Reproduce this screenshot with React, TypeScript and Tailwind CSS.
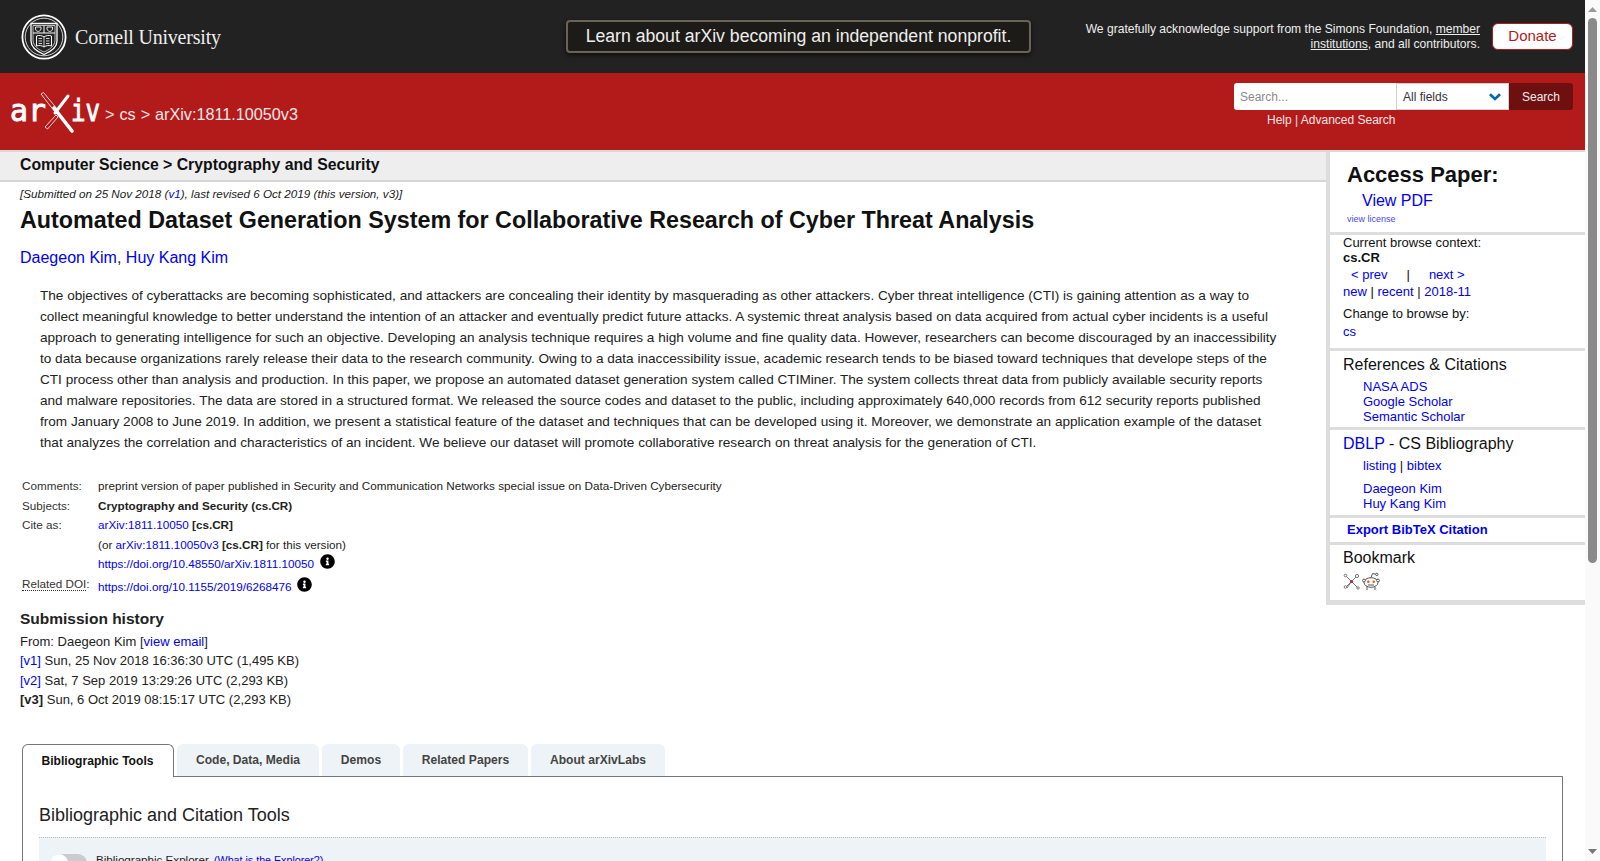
import { FaInfoCircle } from "react-icons/fa";

const link = "text-[#0000ee]";

// Cornell seal
function CornellSeal() {
  return (
    <svg width="46" height="46" viewBox="0 0 46 46" fill="none" stroke="white" className="shrink-0">
      <circle cx="23" cy="23" r="21.6" strokeWidth="1.8" />
      <circle cx="23" cy="23" r="18.8" strokeWidth="0.8" />
      <path d="M10 9.5 H36 V27 C36 34 29 38 23 40.5 C17 38 10 34 10 27 Z" strokeWidth="1.3" />
      <path d="M12 11.5 H34 V26 C34 32 28 36 23 38 C18 36 12 32 12 26 Z" strokeWidth="0.7" />
      <path d="M12 19 H34 M23 11.5 V19" strokeWidth="1" />
      <path d="M14.5 13 H20 V15 C20 17 17 17.5 17 17.5 C17 17.5 14.5 17 14.5 15 Z" strokeWidth="0.9" />
      <path d="M26 13 H31.5 V15 C31.5 17 29 17.5 29 17.5 C29 17.5 26 17 26 15 Z" strokeWidth="0.9" />
      <path d="M15.5 22 C18 21 21 21.5 23 23 C25 21.5 28 21 30.5 22 V32 C28 31 25 31.5 23 33 C21 31.5 18 31 15.5 32 Z" strokeWidth="1" />
      <path d="M23 23 V33 M17.5 24.5 H21 M17.5 27 H21 M17.5 29.5 H21 M25 24.5 H28.5 M25 27 H28.5 M25 29.5 H28.5" strokeWidth="0.8" />
    </svg>
  );
}

function ArxivLogo() {
  return (
    <svg width="92" height="44" viewBox="0 0 92 44" className="shrink-0">
      <text x="0" y="31" fontFamily="'DejaVu Sans Mono', monospace" fontSize="31" fill="white" stroke="white" strokeWidth="0.9" textLength="36" lengthAdjust="spacingAndGlyphs">ar</text>
      <text x="61" y="31" fontFamily="'DejaVu Sans Mono', monospace" fontSize="31" fill="white" stroke="white" strokeWidth="0.9" textLength="29" lengthAdjust="spacingAndGlyphs">iv</text>
      <path d="M31 4 L33.5 2.5 L48 20 L45 22 Z" fill="#b31b1b" stroke="white" strokeWidth="0.8" />
      <path d="M35 37 L46 25 L48 27 L37.5 39 Z" fill="#b31b1b" stroke="white" strokeWidth="0.8" />
      <path d="M44 18 L62 41" stroke="white" strokeWidth="3.6" strokeLinecap="round" />
      <path d="M58 6 L45 23" stroke="white" strokeWidth="3" strokeLinecap="round" />
    </svg>
  );
}

function Chevron() {
  return (
    <svg width="12" height="8" viewBox="0 0 12 8" fill="none" stroke="#0068ac" strokeWidth="2.6">
      <path d="M1 1.2 L6 6 L11 1.2" />
    </svg>
  );
}

function BibsonomyIcon() {
  return (
    <svg width="17" height="17" viewBox="0 0 17 17" fill="none" stroke="#777" strokeWidth="1">
      <path d="M2 2 L15 15 M15 2 L2 15 M8.5 8.5 L4 15 M8.5 8.5 L13 4" />
      <circle cx="2.5" cy="2.5" r="1.3" fill="white" />
      <circle cx="14" cy="3" r="1.6" fill="white" />
      <circle cx="2.5" cy="14" r="1.3" fill="white" />
      <circle cx="15" cy="15" r="1.2" fill="white" />
      <circle cx="8.5" cy="8.5" r="1.6" fill="#b0285a" stroke="none" />
    </svg>
  );
}

function RedditIcon() {
  return (
    <svg width="18" height="19" viewBox="0 0 18 19" fill="none" stroke="#555" strokeWidth="1">
      <ellipse cx="9" cy="10.5" rx="7" ry="4.8" fill="white" />
      <circle cx="2" cy="8.5" r="1.4" fill="white" />
      <circle cx="16" cy="8.5" r="1.4" fill="white" />
      <path d="M9 5.5 L10.5 1.5 L14 2.3" />
      <circle cx="14.8" cy="2.4" r="1.2" fill="white" />
      <circle cx="6.3" cy="9.8" r="1.2" fill="#ff4500" stroke="none" />
      <circle cx="11.7" cy="9.8" r="1.2" fill="#ff4500" stroke="none" />
      <path d="M5 15 V18 M13 15 V18 M6 13 H12" />
    </svg>
  );
}

function TopBanner() {
  return (
    <div className="flex h-[73px] items-center bg-[#222222] text-white">
      <div className="flex w-[552px] shrink-0 items-center pl-[21px]">
        <CornellSeal />
        <span className="ml-[8px] pt-[1px] font-['Liberation_Serif',serif] text-[20px] tracking-[-0.2px] text-[#eeeeee]">Cornell University</span>
      </div>
      <div className="ml-[14px] flex h-[33px] w-[465px] shrink-0 items-center justify-center rounded-[4px] border-2 border-[#6b6358] bg-[#1d1b17] text-[17.65px] text-[#eeeeee] shadow-[0_2px_5px_rgba(0,0,0,0.6)]">
        Learn about arXiv becoming an independent nonprofit.
      </div>
      <div className="ml-auto w-[420px] text-right text-[12.1px] leading-[15px] text-[#eeeeee]">
        We gratefully acknowledge support from the Simons Foundation, <span className="underline">member</span> <span className="underline">institutions</span>, and all contributors.
      </div>
      <div className="ml-[12px] mr-[12px] flex h-[27px] w-[81px] items-center justify-center rounded-[6px] border border-[#b31b1b] bg-white text-[15px] text-[#b31b1b]">
        Donate
      </div>
    </div>
  );
}

function RedHeader() {
  return (
    <div className="flex h-[79px] justify-between border-b-2 border-[#d9d9d9] bg-[#b31b1b] text-white">
      <div className="flex items-center pl-[10px]">
        <ArxivLogo />
        <span className="ml-[3px] mt-[6px] text-[16.2px] [word-spacing:0.5px] text-[#f5e8e8]">&gt; cs &gt; arXiv:1811.10050v3</span>
      </div>
      <div className="mr-[12px] mt-[10px] w-[339px]">
        <div className="flex h-[27px] text-[12px]">
          <div className="flex w-[162px] items-center rounded-l-[3px] bg-white pl-[6px] text-[#8a8a8a]">Search...</div>
          <div className="flex w-[113px] items-center justify-between border border-[#d0d0d0] bg-white pl-[6px] pr-[7px] text-[#333]">
            All fields
            <Chevron />
          </div>
          <div className="flex w-[64px] items-center justify-center rounded-r-[3px] bg-[#6f1010] text-[#eee]">Search</div>
        </div>
        <div className="mt-[1px] pl-[33px] text-[12px] leading-[18px] text-[#f4e4e4]">Help | Advanced Search</div>
      </div>
    </div>
  );
}

function Meta({ label, children }: { label: React.ReactNode; children: React.ReactNode }) {
  return (
    <div className="flex">
      <div className="w-[76px] shrink-0 text-[#333]">{label}</div>
      <div className="text-[#222]">{children}</div>
    </div>
  );
}

function MainColumn() {
  return (
    <div className="min-w-0 flex-1">
      <div className="flex h-[30px] items-center border-b-2 border-[#d5d5d5] bg-[#eeeeee] pb-[2px] pl-[20px] text-[15.8px] font-bold text-[#111]">
        Computer Science &gt; Cryptography and Security
      </div>
      <div className="pl-[20px]">
        <div className="pt-[4px] text-[11.67px] italic leading-[16px] text-[#222]">
          [Submitted on 25 Nov 2018 (<span className={link}>v1</span>), last revised 6 Oct 2019 (this version, v3)]
        </div>
        <h1 className="mt-[4px] text-[23.3px] font-bold leading-[29px] text-[#111]">
          Automated Dataset Generation System for Collaborative Research of Cyber Threat Analysis
        </h1>
        <div className="mt-[13px] text-[16px] leading-[20px] text-[#222]">
          <span className={link}>Daegeon Kim</span>, <span className={link}>Huy Kang Kim</span>
        </div>
        <p className="ml-[20px] mt-[17px] w-[1244px] text-[13.6px] leading-[21px] text-[#222]">
          The objectives of cyberattacks are becoming sophisticated, and attackers are concealing their identity by masquerading as other attackers. Cyber threat intelligence (CTI) is gaining attention as a way to collect meaningful knowledge to better understand the intention of an attacker and eventually predict future attacks. A systemic threat analysis based on data acquired from actual cyber incidents is a useful approach to generating intelligence for such an objective. Developing an analysis technique requires a high volume and fine quality data. However, researchers can become discouraged by an inaccessibility to data because organizations rarely release their data to the research community. Owing to a data inaccessibility issue, academic research tends to be biased toward techniques that develope steps of the CTI process other than analysis and production. In this paper, we propose an automated dataset generation system called CTIMiner. The system collects threat data from publicly available security reports and malware repositories. The data are stored in a structured format. We released the source codes and dataset to the public, including approximately 640,000 records from 612 security reports published from January 2008 to June 2019. In addition, we present a statistical feature of the dataset and techniques that can be developed using it. Moreover, we demonstrate an application example of the dataset that analyzes the correlation and characteristics of an incident. We believe our dataset will promote collaborative research on threat analysis for the generation of CTI.
        </p>
        <div className="ml-[2px] mt-[23px] text-[11.7px] leading-[19.5px]">
          <Meta label="Comments:">preprint version of paper published in Security and Communication Networks special issue on Data-Driven Cybersecurity</Meta>
          <Meta label="Subjects:"><b>Cryptography and Security (cs.CR)</b></Meta>
          <Meta label="Cite as:"><span className={link}>arXiv:1811.10050</span> <b>[cs.CR]</b></Meta>
          <Meta label=""> (or <span className={link}>arXiv:1811.10050v3</span> <b>[cs.CR]</b> for this version)</Meta>
          <Meta label="">
            <span className="flex h-[20px] items-center">
              <span className={link}>https://doi.org/10.48550/arXiv.1811.10050</span>
              <FaInfoCircle className="ml-[6px] mt-[-5px] text-[15px] text-black" />
            </span>
          </Meta>
          <Meta label={<><span className="border-b border-dotted border-[#333] leading-none">Related DOI</span>:</>}>
            <span className="flex h-[25px] items-center">
              <span className={link}>https://doi.org/10.1155/2019/6268476</span>
              <FaInfoCircle className="ml-[6px] mt-[-5px] text-[15px] text-black" />
            </span>
          </Meta>
        </div>
        <h2 className="mt-[10px] text-[15.5px] font-bold leading-[20px] text-[#222]">Submission history</h2>
        <div className="mt-[3px] text-[13px] leading-[19.4px] text-[#222]">
          <div>From: Daegeon Kim [<span className={link}>view email</span>]</div>
          <div><span className={link}>[v1]</span> Sun, 25 Nov 2018 16:36:30 UTC (1,495 KB)</div>
          <div><span className={link}>[v2]</span> Sat, 7 Sep 2019 13:29:26 UTC (2,293 KB)</div>
          <div><b>[v3]</b> Sun, 6 Oct 2019 08:15:17 UTC (2,293 KB)</div>
        </div>
      </div>
    </div>
  );
}

function SideSection({ children, className }: { children: React.ReactNode; className: string }) {
  return <div className={`border-b-[3px] border-[#dddddd] ${className}`}>{children}</div>;
}

function Sidebar() {
  return (
    <div className="h-[453px] w-[259px] shrink-0 border-b-[5px] border-l-[4px] border-[#dddddd] text-[13px] text-[#111]">
      <SideSection className="h-[83px] pl-[17px] pt-[8px]">
        <div className="text-[22px] font-bold leading-[30px] text-[#111]">Access Paper:</div>
        <div className={`ml-[15px] mt-[1px] text-[16px] leading-[20px] ${link}`}>View PDF</div>
        <div className="mt-[1px] text-[9px] leading-[14px] text-[#4848ee]">view license</div>
      </SideSection>
      <SideSection className="h-[116px] pl-[13px]">
        <div className="leading-[16px]">Current browse context:</div>
        <div className="font-bold leading-[14px]">cs.CR</div>
        <div className="mt-[1px] flex leading-[17px]">
          <span className={`ml-[8px] ${link}`}>&lt;&nbsp;prev</span>
          <span className="ml-[19px]">|</span>
          <span className={`ml-[19px] ${link}`}>next&nbsp;&gt;</span>
        </div>
        <div className="leading-[17px]"><span className={link}>new</span> | <span className={link}>recent</span> | <span className={link}>2018-11</span></div>
        <div className="mt-[5px] leading-[17px]">Change to browse by:</div>
        <div className={`mt-[1px] leading-[17px] ${link}`}>cs</div>
      </SideSection>
      <SideSection className="h-[79px] pl-[13px] pt-[4px]">
        <div className="text-[16px] leading-[20px]">References &amp; Citations</div>
        <div className={`ml-[20px] mt-[4px] leading-[15px] ${link}`}>
          <div>NASA ADS</div>
          <div>Google Scholar</div>
          <div>Semantic Scholar</div>
        </div>
      </SideSection>
      <SideSection className="h-[88px] pl-[13px] pt-[4px]">
        <div className="text-[16px] leading-[20px]"><span className={link}>DBLP</span> - CS Bibliography</div>
        <div className="ml-[20px] mt-[4px] leading-[16px]">
          <div><span className={link}>listing</span> | <span className={link}>bibtex</span></div>
          <div className={`mt-[7px] leading-[15px] ${link}`}>
            <div>Daegeon Kim</div>
            <div>Huy Kang Kim</div>
          </div>
        </div>
      </SideSection>
      <SideSection className={`flex h-[27px] items-center pl-[17px] font-bold ${link}`}>Export BibTeX Citation</SideSection>
      <div className="pl-[13px] pt-[3px]">
        <div className="text-[16px] leading-[20px]">Bookmark</div>
        <div className="mt-[4px] flex items-center gap-[2px]">
          <BibsonomyIcon />
          <RedditIcon />
        </div>
      </div>
    </div>
  );
}

function Tabs() {
  const others = [
    { label: "Code, Data, Media", width: "w-[142px]" },
    { label: "Demos", width: "w-[78px]" },
    { label: "Related Papers", width: "w-[125px]" },
    { label: "About arXivLabs", width: "w-[134px]" },
  ];
  return (
    <div className="ml-[22px] mr-[22px] mt-[34px]">
      <div className="relative z-10 flex h-[33px] items-stretch text-[12.1px] font-bold">
        <div className="flex w-[152px] items-center justify-center rounded-t-[6px] border border-b-0 border-[#777] bg-white pr-[1px] text-[#111]">Bibliographic Tools</div>
        <div className="ml-[3px] flex gap-[3px]">
          {others.map((t) => (
            <div key={t.label} className={`flex h-[32px] items-center justify-center rounded-t-[6px] bg-[#edf3f7] text-[#444] ${t.width}`}>{t.label}</div>
          ))}
        </div>
      </div>
      <div className="-mt-px h-[520px] border border-[#777] px-[16px] pt-[26px]">
        <h2 className="text-[18px] leading-[24px] text-[#222]">Bibliographic and Citation Tools</h2>
        <div className="mt-[10px] flex h-[120px] items-start border-t border-dotted border-[#bbb] bg-[#edf3f7] pl-[11px] pt-[16px]">
          <div className="relative h-[18px] w-[37px] rounded-full bg-[#ccc]">
            <div className="absolute left-0 top-0 h-[18px] w-[18px] rounded-full bg-white" />
          </div>
          <span className="ml-[9px] text-[11.6px] leading-[12px] text-[#222]">Bibliographic Explorer <span className={`ml-[2px] text-[10.7px] ${link}`}>(What is the Explorer?)</span></span>
        </div>
      </div>
    </div>
  );
}

// drawn because the headless window shows no real scrollbar
function ScrollTrack() {
  return (
    <div className="flex h-full w-[15px] shrink-0 flex-col items-center bg-[#fafafa]">
      <svg width="9" height="5" viewBox="0 0 9 5" className="mt-[7px] shrink-0">
        <path d="M4.5 0 L9 5 H0 Z" fill="#999" />
      </svg>
      <div className="mt-[6px] h-[545px] w-[9px] rounded-[5px] bg-[#8a8a8a]" />
      <svg width="9" height="5" viewBox="0 0 9 5" className="mb-[7px] mt-auto shrink-0">
        <path d="M0 0 H9 L4.5 5 Z" fill="#777" />
      </svg>
    </div>
  );
}

export default function App() {
  return (
    <div className="flex h-screen overflow-hidden bg-white font-['Liberation_Sans',Arial,sans-serif]">
      <div className="w-[1585px] shrink-0">
        <TopBanner />
        <RedHeader />
        <div className="flex items-start">
          <MainColumn />
          <Sidebar />
        </div>
        <Tabs />
      </div>
      <ScrollTrack />
    </div>
  );
}
